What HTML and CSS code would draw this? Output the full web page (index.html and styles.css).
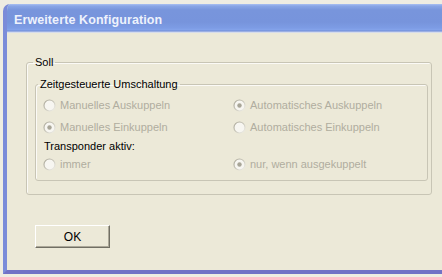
FILE: index.html
```html
<!DOCTYPE html>
<html lang="de">
<head>
    <meta charset="UTF-8">
    <title>Erweiterte Konfiguration</title>
    <link rel="stylesheet" href="styles.css">
</head>
<body>
    <svg class="defs" width="0" height="0">
        <defs>
            <linearGradient id="ring" x1="0" y1="0" x2="1" y2="1">
                <stop offset="0" stop-color="#a9a698"/>
                <stop offset="0.55" stop-color="#cdcbbf"/>
                <stop offset="1" stop-color="#f3f2ec"/>
            </linearGradient>
            <symbol id="radio-off" viewBox="0 0 13 13">
                <circle cx="6.5" cy="6.5" r="5.5" fill="#f7f6f1" stroke="url(#ring)" stroke-width="1.2"/>
            </symbol>
            <symbol id="radio-on" viewBox="0 0 13 13">
                <circle cx="6.5" cy="6.5" r="5.5" fill="#f7f6f1" stroke="url(#ring)" stroke-width="1.2"/>
                <circle cx="6.5" cy="6.5" r="2.2" fill="#a8a597"/>
            </symbol>
        </defs>
    </svg>

    <div class="window">
        <div class="titlebar">
            <span class="title">Erweiterte Konfiguration</span>
        </div>

        <div class="client">
            <fieldset class="group outer">
                <legend>Soll</legend>

                <fieldset class="group inner">
                    <legend>Zeitgesteuerte Umschaltung</legend>

                    <div class="options">
                        <label class="option"><svg class="radio"><use href="#radio-off"/></svg>Manuelles Auskuppeln</label>
                        <label class="option"><svg class="radio"><use href="#radio-on"/></svg>Automatisches Auskuppeln</label>
                        <label class="option"><svg class="radio"><use href="#radio-on"/></svg>Manuelles Einkuppeln</label>
                        <label class="option"><svg class="radio"><use href="#radio-off"/></svg>Automatisches Einkuppeln</label>
                    </div>

                    <div class="subhead">Transponder aktiv:</div>

                    <div class="options last">
                        <label class="option"><svg class="radio"><use href="#radio-off"/></svg>immer</label>
                        <label class="option"><svg class="radio"><use href="#radio-on"/></svg>nur, wenn ausgekuppelt</label>
                    </div>
                </fieldset>
            </fieldset>

            <button class="btn" type="button">OK</button>
        </div>
    </div>
</body>
</html>
```

FILE: styles.css
```css
* {
    margin: 0;
    padding: 0;
    box-sizing: border-box;
}

body {
    font-family: 'Liberation Sans', Arial, sans-serif;
    font-size: 11px;
    background: #efede2;
    width: 442px;
    height: 277px;
    overflow: hidden;
}

.defs {
    position: absolute;
}

.window {
    margin: 4px 0 0 3px;
    width: 439px;
    height: 270px;
    background: #ece9d8;
    border-left: 4px solid #7b8cd9;
    border-bottom: 4px solid #7272c6;
    border-radius: 7px 0 0 0;
    overflow: hidden;
}

.titlebar {
    height: 29px;
    margin-left: -4px;
    padding: 2px 0 0 11px;
    display: flex;
    align-items: center;
    background: linear-gradient(to bottom,
        #a9c0f1 0px, #8aa6e6 2px, #7895dc 6px, #7794dc 18px,
        #7d9ce5 24px, #85a4ea 26px, #6f8bd6 27px, #c9d4f0 28px, #e3e4e6 29px);
    border-radius: 7px 0 0 0;
}

.title {
    color: #eef2fc;
    font-weight: bold;
    font-size: 12.5px;
    letter-spacing: 0.1px;
}

.client {
    padding: 22px 0 0 19px;
}

.group {
    border: 1px solid #c8c5b5;
    border-radius: 3px;
    box-shadow: inset 1px 1px 0 #fbfaf6;
}

.group legend {
    padding: 0 2px;
    line-height: 14px;
    color: #000;
}

.outer {
    width: 406px;
    padding: 0 0 13px 8px;
}

.outer legend {
    margin-left: -2px;
}

.inner {
    width: 393px;
    margin-top: 8px;
    padding: 3px 0 6px 7px;
}

.inner legend {
    margin-left: -5px;
}

.options {
    display: grid;
    grid-template-columns: 190px 1fr;
    grid-auto-rows: 22px;
}

.options.last {
    grid-auto-rows: 20px;
}

.option {
    display: flex;
    align-items: center;
    gap: 4px;
    color: #b0ad9f;
    white-space: nowrap;
}

.radio {
    width: 13px;
    height: 13px;
    flex: none;
}

.subhead {
    height: 16px;
    line-height: 16px;
    padding-left: 1px;
    color: #000;
}

.btn {
    display: block;
    margin: 30px 0 0 9px;
    width: 75px;
    height: 23px;
    font-family: 'Liberation Sans', Arial, sans-serif;
    font-size: 12px;
    color: #000;
    background: #ece9d8;
    border: 1px solid;
    border-color: #ffffff #716f64 #716f64 #ffffff;
    box-shadow: inset -1px -1px 0 #aca899;
}
```
